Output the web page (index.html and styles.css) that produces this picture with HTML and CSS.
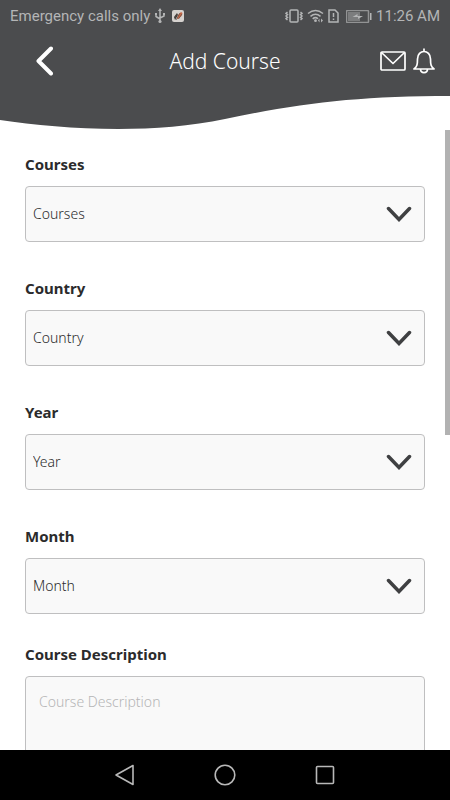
FILE: index.html
```html
<!DOCTYPE html>
<html lang="en">
<head>
<meta charset="utf-8">
<meta name="viewport" content="width=device-width, initial-scale=1">
<title>Add Course</title>
<link rel="stylesheet" href="styles.css">
</head>
<body>
<div class="screen">
  <header class="header">
    <svg class="wave" viewBox="0 0 450 130" preserveAspectRatio="none" aria-hidden="true">
      <path d="M0 0H450V96C360 96 300 103 225 119C150 135 60 129 0 120Z"/>
    </svg>
    <div class="status">
      <span class="carrier">Emergency calls only</span>
      <svg class="usb" width="12" height="16" viewBox="0 0 12 16" aria-hidden="true">
        <path class="line" d="M6 3V13M2 6V8.500L6 11M10 6V8L6 10"/>
        <path class="solid" d="M6 0L8 3H4ZM1 5H3V7H1ZM9 5H11V7H9Z"/>
        <circle class="solid" cx="6" cy="13.500" r="1.600"/>
      </svg>
      <svg class="app" width="12" height="12" viewBox="0 0 12 12" aria-hidden="true">
        <rect width="12" height="12" rx="2" fill="#d6d2cf"/>
        <path d="M2 7L5 3L6 5L3 10Z" fill="#3b3b3b"/>
        <path d="M5 9L6 5L9 2L10.500 3L9.500 6L6 9Z" fill="#c96747"/>
        <path d="M4 10L8 3M2.500 8L5 4M6.500 9L10 4" stroke="#5a4a43" stroke-width=".7"/>
      </svg>
      <span class="spacer"></span>
      <svg class="vibrate" width="18" height="16" viewBox="0 0 18 16" aria-hidden="true">
        <rect class="line" x="5" y="2" width="8" height="12" rx="1"/>
        <path class="line" d="M2.500 4L1 5.300L2.500 6.600L1 8L2.500 9.400L1 10.700L2.500 12M15.500 4L17 5.300L15.500 6.600L17 8L15.500 9.400L17 10.700L15.500 12"/>
      </svg>
      <svg class="wifi" width="17" height="16" viewBox="0 0 17 16" aria-hidden="true">
        <path class="line" d="M1 5.500Q8.500-.5 16 5.500M3.500 8.300Q8.500 4.200 13.500 8.300M5.700 10.800Q8.500 8.500 11 10.800"/>
        <circle class="solid" cx="8.500" cy="12.700" r="1.400"/>
        <path class="solid" d="M11 12.500L12.500 10.500V14.500ZM16 12.500L14 10.500V14.500Z"/>
      </svg>
      <svg class="sim" width="11" height="14" viewBox="0 0 11 14" aria-hidden="true">
        <path class="line" d="M1 1H7L10 4V13H1Z"/>
        <path class="line" d="M5.500 4V8M5.500 9.500V11"/>
      </svg>
      <svg class="battery" width="26" height="13" viewBox="0 0 26 13" aria-hidden="true">
        <rect class="line" x=".5" y=".5" width="22" height="12" rx="1"/>
        <rect x="2" y="2" width="12" height="9" fill="#7c7d7e"/>
        <path class="solid" d="M24 3H25.500V10H24ZM6.500 7L11.500 4V6H17L12 9V7Z"/>
      </svg>
      <span class="clock">11:26 AM</span>
    </div>
    <div class="toolbar">
      <button class="icon-button back" type="button" aria-label="Back">
        <svg width="18" height="30" viewBox="0 0 18 30"><path d="M16 2.500L3.500 15L16 27.500"/></svg>
      </button>
      <h1 class="title">Add Course</h1>
      <div class="actions">
        <button class="icon-button" type="button" aria-label="Messages">
          <svg width="26" height="20" viewBox="0 0 26 20"><rect x="1" y="1" width="24" height="18" rx="1"/><path d="M1.500 1.500L13 12.500L24.500 1.500"/></svg>
        </button>
        <button class="icon-button" type="button" aria-label="Notifications">
          <svg width="22" height="26" viewBox="0 0 22 26"><path d="M11 .5V3.500M1 21C4 18.500 4.500 17 4.500 11C4.500 1 17.500 1 17.500 11C17.500 17 18 18.500 21 21ZM7.500 21C7.500 25.800 14.500 25.800 14.500 21"/></svg>
        </button>
      </div>
    </div>
  </header>

  <main class="content">
    <form class="form">
      <div class="field">
        <label for="courses">Courses</label>
        <div class="picker">
          <select id="courses"><option>Courses</option></select>
          <svg class="chevron" width="26" height="16" viewBox="0 0 26 16" aria-hidden="true"><path d="M2.500 2.500L13 13.500L23.500 2.500"/></svg>
        </div>
      </div>
      <div class="field">
        <label for="country">Country</label>
        <div class="picker">
          <select id="country"><option>Country</option></select>
          <svg class="chevron" width="26" height="16" viewBox="0 0 26 16" aria-hidden="true"><path d="M2.500 2.500L13 13.500L23.500 2.500"/></svg>
        </div>
      </div>
      <div class="field">
        <label for="year">Year</label>
        <div class="picker">
          <select id="year"><option>Year</option></select>
          <svg class="chevron" width="26" height="16" viewBox="0 0 26 16" aria-hidden="true"><path d="M2.500 2.500L13 13.500L23.500 2.500"/></svg>
        </div>
      </div>
      <div class="field field-last-picker">
        <label for="month">Month</label>
        <div class="picker">
          <select id="month"><option>Month</option></select>
          <svg class="chevron" width="26" height="16" viewBox="0 0 26 16" aria-hidden="true"><path d="M2.500 2.500L13 13.500L23.500 2.500"/></svg>
        </div>
      </div>
      <div class="field">
        <label for="description">Course Description</label>
        <textarea id="description" rows="5" placeholder="Course Description"></textarea>
      </div>
    </form>
  </main>
  <div class="scroll-thumb" aria-hidden="true"></div>

  <nav class="navbar" aria-label="System">
    <button class="nav-button" type="button" aria-label="Back">
      <svg width="22" height="22" viewBox="0 0 22 22"><path d="M19 1.500V20.500L2 11Z"/></svg>
    </button>
    <button class="nav-button" type="button" aria-label="Home">
      <svg width="22" height="22" viewBox="0 0 22 22"><circle cx="11" cy="11" r="9.800"/></svg>
    </button>
    <button class="nav-button" type="button" aria-label="Recent apps">
      <svg width="22" height="22" viewBox="0 0 22 22"><rect x="2.500" y="2.500" width="17" height="17" rx="1"/></svg>
    </button>
  </nav>
</div>
</body>
</html>
```
FILE: styles.css
```css
* {
  box-sizing: border-box;
}

body {
  margin: 0;
  background: #fff;
  color: #2b2b2c;
  font-family: "Noto Sans", "Open Sans", sans-serif;
}

button {
  display: flex;
  padding: 0;
  border: 0;
  background: none;
}

svg {
  display: block;
  flex: none;
  fill: none;
}

.screen {
  position: relative;
  display: flex;
  flex-direction: column;
  height: 100vh;
  overflow: hidden;
}

.header {
  position: relative;
  flex: none;
  height: 130px;
}

.wave {
  position: absolute;
  inset: 0;
  width: 100%;
  height: 100%;
  fill: #4b4c4e;
}

.status {
  position: relative;
  display: flex;
  align-items: center;
  height: 32px;
  padding: 0 10px;
  color: #b4b5b6;
  font: 15px/32px Roboto, sans-serif;
}

.status .line {
  stroke: #b4b5b6;
  stroke-width: 1.5;
}

.status .battery .line {
  stroke: #929394;
}

.status .solid {
  fill: #b4b5b6;
}

.usb {
  margin-left: 4px;
}

.app {
  margin-left: 6px;
}

.spacer {
  flex: 1;
}

.wifi {
  margin-left: 4px;
}

.sim {
  margin-left: 4px;
}

.battery {
  margin: 0 4px 0 7px;
}

.toolbar {
  position: relative;
  display: grid;
  grid-template-columns: 1fr auto 1fr;
  align-items: center;
  height: 58px;
  padding: 0 15px 0 35px;
}

.title {
  margin: 0;
  padding-right: 20px;
  color: #fff;
  font-size: 21px;
  font-weight: 300;
  line-height: 32px;
}

.icon-button svg {
  stroke: #fff;
  stroke-width: 1.7;
  stroke-linejoin: round;
}

.icon-button.back svg {
  stroke-width: 4;
  stroke-linecap: round;
}

.actions {
  display: flex;
  align-items: center;
  justify-content: flex-end;
  gap: 7px;
}

.content {
  flex: 1;
  min-height: 0;
  overflow-y: auto;
  scrollbar-width: none;
}

.form {
  padding: 22px 25px;
}

.field {
  display: flex;
  flex-direction: column;
  gap: 10px;
  margin-bottom: 34px;
}

.field-last-picker {
  margin-bottom: 28px;
}

.field label {
  font-size: 15px;
  font-weight: 700;
  line-height: 24px;
}

.picker {
  position: relative;
}

select,
textarea {
  display: block;
  width: 100%;
  border: 1px solid #bfbfc0;
  border-radius: 4px;
  background: #f9f9f9;
  color: #2b2b2c;
  font-family: inherit;
  font-size: 14px;
  font-weight: 300;
}

select {
  height: 56px;
  padding: 0 50px 2px 7px;
  appearance: none;
}

textarea {
  height: 140px;
  padding: 15px 13px;
  line-height: 20px;
  resize: none;
}

textarea::placeholder {
  color: #b5b5b6;
}

.chevron {
  position: absolute;
  top: 20px;
  right: 13px;
  stroke: #3f4042;
  stroke-width: 3.5;
  stroke-linecap: round;
  stroke-linejoin: miter;
  pointer-events: none;
}

.scroll-thumb {
  position: absolute;
  top: 130px;
  right: 0;
  width: 5px;
  height: 305px;
  background: #b2b2b2;
}

.navbar {
  display: flex;
  flex: none;
  align-items: center;
  justify-content: center;
  gap: 78px;
  height: 50px;
  background: #000;
}

.nav-button svg {
  stroke: #b8b8b8;
  stroke-width: 1.6;
  stroke-linejoin: round;
}
```
